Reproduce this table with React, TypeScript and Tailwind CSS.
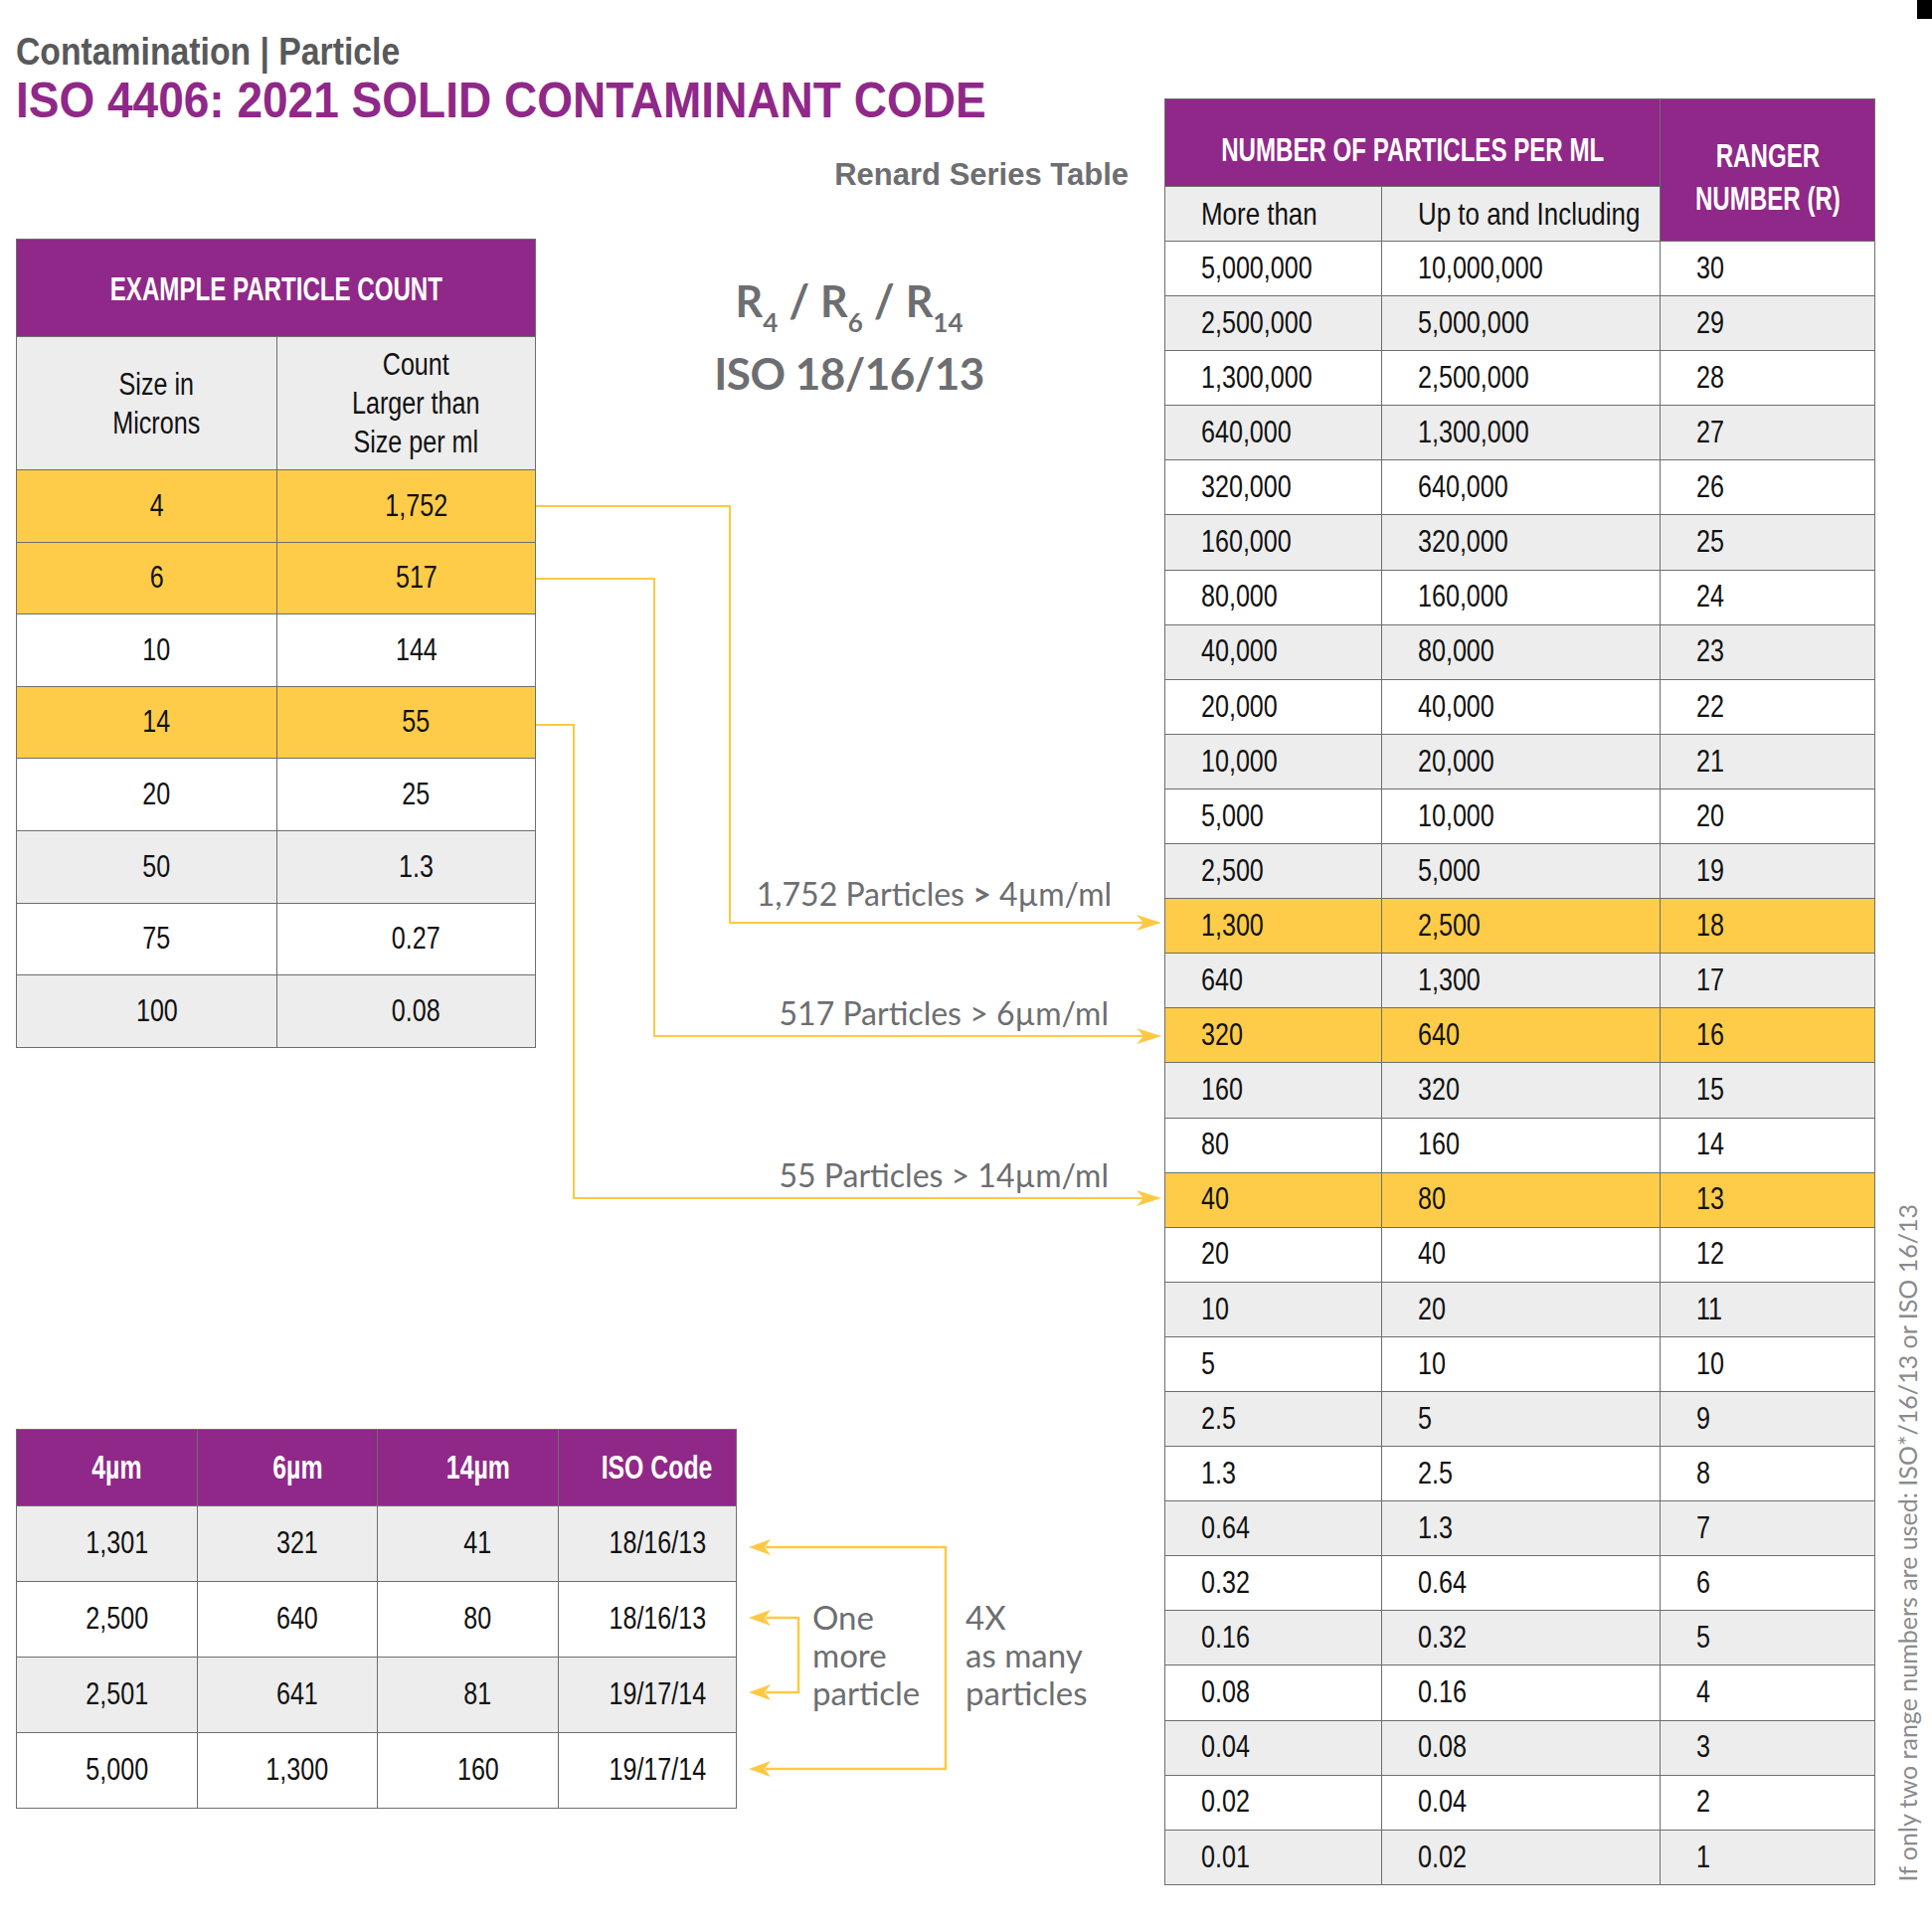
import React from "react";

const C = "font-['Liberation_Sans',Arial,sans-serif]";
const G = "font-['Lato','Open_Sans',sans-serif]";

const NB = "inline-block whitespace-nowrap scale-x-[0.81] origin-center";
const NL = "inline-block whitespace-nowrap scale-x-[0.81] origin-left";
const HB = "inline-block whitespace-nowrap scale-x-[0.73] origin-center";

const rightRows: [string, string, number][] = [
  ["5,000,000", "10,000,000", 30],
  ["2,500,000", "5,000,000", 29],
  ["1,300,000", "2,500,000", 28],
  ["640,000", "1,300,000", 27],
  ["320,000", "640,000", 26],
  ["160,000", "320,000", 25],
  ["80,000", "160,000", 24],
  ["40,000", "80,000", 23],
  ["20,000", "40,000", 22],
  ["10,000", "20,000", 21],
  ["5,000", "10,000", 20],
  ["2,500", "5,000", 19],
  ["1,300", "2,500", 18],
  ["640", "1,300", 17],
  ["320", "640", 16],
  ["160", "320", 15],
  ["80", "160", 14],
  ["40", "80", 13],
  ["20", "40", 12],
  ["10", "20", 11],
  ["5", "10", 10],
  ["2.5", "5", 9],
  ["1.3", "2.5", 8],
  ["0.64", "1.3", 7],
  ["0.32", "0.64", 6],
  ["0.16", "0.32", 5],
  ["0.08", "0.16", 4],
  ["0.04", "0.08", 3],
  ["0.02", "0.04", 2],
  ["0.01", "0.02", 1],
];

const leftRows: [string, string, string][] = [
  ["4", "1,752", "y"],
  ["6", "517", "y"],
  ["10", "144", "w"],
  ["14", "55", "y"],
  ["20", "25", "w"],
  ["50", "1.3", "g"],
  ["75", "0.27", "w"],
  ["100", "0.08", "g"],
];

const bottomRows: [string, string, string, string, string][] = [
  ["1,301", "321", "41", "18/16/13", "g"],
  ["2,500", "640", "80", "18/16/13", "w"],
  ["2,501", "641", "81", "19/17/14", "g"],
  ["5,000", "1,300", "160", "19/17/14", "w"],
];

const bgOf = (k: string) =>
  k === "y" ? "bg-[#fecc48]" : k === "g" ? "bg-[#ededed]" : "bg-white";

function arrowRight(tx: number, y: number) {
  return `${tx},${y} ${tx - 25},${y - 8} ${tx - 18},${y} ${tx - 25},${y + 8}`;
}
function arrowLeft(tx: number, y: number) {
  return `${tx},${y} ${tx + 22},${y - 8} ${tx + 16},${y} ${tx + 22},${y + 8}`;
}

function LeftTable() {
  return (
    <div className={`w-[523px] border border-[#6e6e6e] text-[#111] ${C}`}>
      <div className="h-[97px] bg-[#8f2889] flex items-center justify-center pt-[2px] text-white font-bold text-[33px] leading-none">
        <span className={HB}>EXAMPLE PARTICLE COUNT</span>
      </div>
      <div className="h-[134px] border-t border-[#6e6e6e] bg-[#ededed] grid grid-cols-[261px_1fr] text-[31px] leading-[39px]">
        <div className="flex items-center justify-center text-center pl-[20px]">
          <span className={NB}>
            Size in
            <br />
            Microns
          </span>
        </div>
        <div className="flex items-center justify-center text-center border-l border-[#6e6e6e] pl-[20px]">
          <span className={NB}>
            Count
            <br />
            Larger than
            <br />
            Size per ml
          </span>
        </div>
      </div>
      {leftRows.map(([a, b, k]) => (
        <div
          key={a}
          className={`h-[72.6px] border-t border-[#6e6e6e] grid grid-cols-[261px_1fr] text-[31px] ${bgOf(k)}`}
        >
          <div className="flex items-center justify-center pl-[20px]">
            <span className={NB}>{a}</span>
          </div>
          <div className="flex items-center justify-center border-l border-[#6e6e6e] pl-[20px]">
            <span className={NB}>{b}</span>
          </div>
        </div>
      ))}
    </div>
  );
}

function BottomTable() {
  return (
    <div className={`w-[725px] border border-[#6e6e6e] text-[#111] ${C}`}>
      <div className="h-[76px] bg-[#8f2889] grid grid-cols-[181px_181px_182px_1fr] text-white font-bold text-[34px]">
        {["4µm", "6µm", "14µm", "ISO Code"].map((h, i) => (
          <div
            key={h}
            className={`flex items-center justify-center pl-[20px] ${i > 0 ? "border-l border-[#6e6e6e]" : ""}`}
          >
            <span className={HB}>{h}</span>
          </div>
        ))}
      </div>
      {bottomRows.map((r, ri) => (
        <div
          key={ri}
          className={`h-[76px] border-t border-[#6e6e6e] grid grid-cols-[181px_181px_182px_1fr] text-[31px] ${bgOf(r[4])}`}
        >
          {r.slice(0, 4).map((c, i) => (
            <div
              key={i}
              className={`flex items-center justify-center pl-[20px] ${i > 0 ? "border-l border-[#6e6e6e]" : ""}`}
            >
              <span className={NB}>{c}</span>
            </div>
          ))}
        </div>
      ))}
    </div>
  );
}

function RightTable() {
  return (
    <div className={`w-[715px] border border-[#6e6e6e] text-[#111] ${C}`}>
      <div className="flex">
        <div className="w-[497px]">
          <div className="h-[87px] bg-[#8f2889] flex items-center justify-center pt-[14px] text-white font-bold text-[33px] leading-none">
            <span className={HB}>NUMBER OF PARTICLES PER ML</span>
          </div>
          <div className="h-[55px] border-t border-[#6e6e6e] bg-[#ededed] grid grid-cols-[217px_1fr] text-[32px]">
            <div className="flex items-center pl-[36px]">
              <span className={NL}>More than</span>
            </div>
            <div className="flex items-center pl-[36px] border-l border-[#6e6e6e]">
              <span className={NL}>Up to and Including</span>
            </div>
          </div>
        </div>
        <div className="flex-1 bg-[#8f2889] border-l border-[#6e6e6e] flex items-center justify-center text-center pt-[14px] text-white font-bold text-[33px] leading-[43px]">
          <span className={HB}>
            RANGER
            <br />
            NUMBER (R)
          </span>
        </div>
      </div>
      {rightRows.map(([a, b, r]) => {
        const yellow = r === 18 || r === 16 || r === 13;
        const bg = yellow ? "bg-[#fecc48]" : r % 2 === 0 ? "bg-white" : "bg-[#ededed]";
        return (
          <div
            key={r}
            className={`h-[55.1px] border-t border-[#6e6e6e] grid grid-cols-[217px_280px_1fr] text-[31px] ${bg}`}
          >
            <div className="flex items-center pl-[36px]">
              <span className={NL}>{a}</span>
            </div>
            <div className="flex items-center pl-[36px] border-l border-[#6e6e6e]">
              <span className={NL}>{b}</span>
            </div>
            <div className="flex items-center pl-[36px] border-l border-[#6e6e6e]">
              <span className={NL}>{r}</span>
            </div>
          </div>
        );
      })}
    </div>
  );
}

function Overlay() {
  const Y = "#fdc944";
  return (
    <svg
      className="absolute inset-0 pointer-events-none"
      width={1943}
      height={1938}
      viewBox="0 0 1943 1938"
    >
      <g fill="none" stroke={Y} strokeWidth={2}>
        <path d="M539 509 H734 V928 H1150" />
        <path d="M539 582 H658 V1042 H1150" />
        <path d="M539 729 H577 V1205 H1150" />
      </g>
      <g fill={Y}>
        <polygon points={arrowRight(1168, 928)} />
        <polygon points={arrowRight(1168, 1042)} />
        <polygon points={arrowRight(1168, 1205)} />
      </g>
      <g fill="none" stroke={Y} strokeWidth={2.5}>
        <path d="M770 1556 H951 V1779 H770" />
        <path d="M770 1627 H803 V1702 H770" />
      </g>
      <g fill={Y}>
        <polygon points={arrowLeft(753, 1556)} />
        <polygon points={arrowLeft(753, 1779)} />
        <polygon points={arrowLeft(753, 1627)} />
        <polygon points={arrowLeft(753, 1702)} />
      </g>
    </svg>
  );
}

export default function App() {
  return (
    <div className="relative w-[1943px] h-[1938px] bg-white overflow-hidden">
      <div className="flex items-start">
        {/* Left column */}
        <div className="w-[1171px] pl-4 pt-[30px]">
          <div className={`${C} font-bold text-[39px] leading-[44px] text-[#58595b]`}>
            <span className="inline-block whitespace-nowrap scale-x-[0.865] origin-left">
              Contamination | Particle
            </span>
          </div>
          <div className={`${C} font-bold text-[50px] leading-[56px] -mt-px text-[#8f2889]`}>
            <span className="inline-block whitespace-nowrap scale-x-[0.92] origin-left">
              ISO 4406: 2021 SOLID CONTAMINANT CODE
            </span>
          </div>
          <div
            className={`${C} font-bold text-[31px] leading-[36px] mt-[29px] text-right pr-[36px] text-[#6d6e71]`}
          >
            Renard Series Table
          </div>
          <div className="flex items-start mt-[46px]">
            <LeftTable />
            <div className={`${G} ml-[165px] w-[300px] mt-[36px] text-center font-bold text-[#6d6e71]`}>
              <div className="text-[43px] leading-[52px] whitespace-nowrap">
                R<span className="text-[26px] relative top-[15px]">4</span>
                <span className="text-[45px]"> / </span>R
                <span className="text-[26px] relative top-[15px]">6</span>
                <span className="text-[45px]"> / </span>R
                <span className="text-[26px] relative top-[15px]">14</span>
              </div>
              <div className="text-[44px] leading-[56px] mt-[12px] tracking-[-0.5px] whitespace-nowrap">
                ISO 18/16/13
              </div>
            </div>
          </div>
          <div className="flex items-start mt-[383px]">
            <BottomTable />
            <div
              className={`${G} text-[33px] leading-[38px] text-[#6d6e71] mt-[170px] ml-[76px] w-[154px]`}
            >
              One
              <br />
              more
              <br />
              particle
            </div>
            <div className={`${G} text-[33px] leading-[38px] text-[#6d6e71] mt-[170px]`}>
              4X
              <br />
              as many
              <br />
              particles
            </div>
          </div>
        </div>
        {/* Right table */}
        <div className="pt-[99px]">
          <RightTable />
        </div>
        {/* Vertical note */}
        <div className="self-stretch flex flex-col justify-end pb-[3px] pl-[20px]">
          <div
            className={`${G} text-[25px] leading-[25px] text-[#8a8b8d] whitespace-nowrap [writing-mode:vertical-rl] rotate-180`}
          >
            If only two range numbers are used: ISO*/16/13 or ISO 16/13
          </div>
        </div>
      </div>

      <Overlay />

      <div className={`${G} absolute right-[825px] top-[880px] text-[32px] leading-[38px] text-[#6d6e71] whitespace-nowrap`}>
        1,752 Particles <span className="font-bold">&gt;</span> 4µm/ml
      </div>
      <div className={`${G} absolute right-[828px] top-[1000px] text-[32px] leading-[38px] text-[#6d6e71] whitespace-nowrap`}>
        517 Particles &gt; 6µm/ml
      </div>
      <div className={`${G} absolute right-[828px] top-[1163px] text-[32px] leading-[38px] text-[#6d6e71] whitespace-nowrap`}>
        55 Particles &gt; 14µm/ml
      </div>

      <div className="absolute top-0 right-0 w-[15px] h-[19px] bg-black" />
    </div>
  );
}
